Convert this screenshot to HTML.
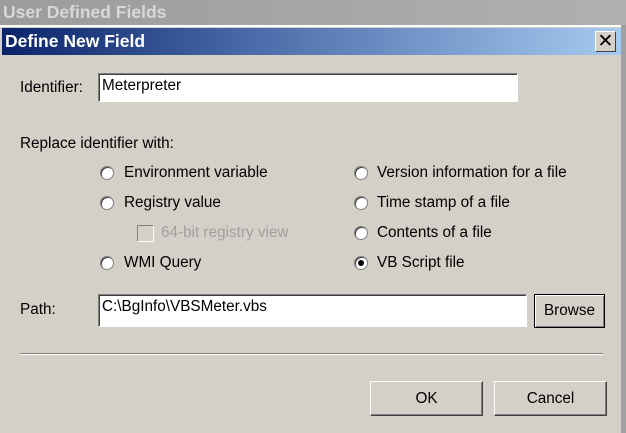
<!DOCTYPE html>
<html><head><meta charset="utf-8"><style>
body{margin:0;width:626px;height:433px;overflow:hidden;background:#d4d0c8;font-family:"Liberation Sans",Arial,sans-serif;font-size:15.3px;color:#000;position:relative}
.a{position:absolute}
.top{left:0;top:0;width:626px;height:25px;background:linear-gradient(90deg,#9c9c9c,#b0b0b0);color:#d8d8d8;font-weight:bold;font-size:17.5px;line-height:24px;padding-left:3px;box-sizing:border-box}
.title{left:2px;top:28px;width:619px;height:27px;background:linear-gradient(90deg,#0a246a,#4a6aa8 40%,#a6caf0);color:#fff;font-weight:bold;font-size:17.5px;line-height:27px;padding-left:3px;box-sizing:border-box}
.x{left:595px;top:31px;width:21px;height:21px;background:#d4d0c8;border:1px solid;border-color:#fff #404040 #404040 #fff;box-sizing:border-box;text-align:center;line-height:19px;font-size:19px}
.in{background:#fff;border:1px solid;border-color:#808080 #fff #fff #808080;box-shadow:inset 1px 1px 0 #404040;box-sizing:border-box;padding:2px 3px;line-height:20px}
.btn{border:1px solid;border-color:#fff #404040 #404040 #fff;box-shadow:inset -1px -1px 0 #808080;box-sizing:border-box;text-align:center}
.r{width:14px;height:14px;border-radius:50%;background:#fff;border:1px solid #808080;box-sizing:border-box;box-shadow:inset 1px 1px 0 #404040}
.t{line-height:16px}
</style></head><body>
<div class="a top">User Defined Fields</div>
<div class="a" style="left:0;top:25px;width:622px;height:2px;background:#fff"></div>
<div class="a" style="left:621px;top:25px;width:5px;height:408px;background:#a0a0a0"></div>
<div class="a title">Define New Field</div>
<div class="a x">✕</div>
<div class="a t" style="left:20px;top:80px">Identifier:</div>
<div class="a in" style="left:98px;top:73px;width:420px;height:29px">Meterpreter</div>
<div class="a t" style="left:20px;top:136px">Replace identifier with:</div>
<div class="a r" style="left:100px;top:166px"></div><div class="a t" style="left:124px;top:165px">Environment variable</div>
<div class="a r" style="left:100px;top:196px"></div><div class="a t" style="left:124px;top:195px">Registry value</div>
<div class="a" style="left:137px;top:225px;width:17px;height:17px;border:1px solid #808080;border-right-color:#fff;border-bottom-color:#fff;box-sizing:border-box"></div><div class="a t" style="left:161px;top:225px;color:#a0a0a0">64-bit registry view</div>
<div class="a r" style="left:100px;top:256px"></div><div class="a t" style="left:124px;top:255px">WMI Query</div>
<div class="a r" style="left:354px;top:166px"></div><div class="a t" style="left:377px;top:165px">Version information for a file</div>
<div class="a r" style="left:354px;top:196px"></div><div class="a t" style="left:377px;top:195px">Time stamp of a file</div>
<div class="a r" style="left:354px;top:226px"></div><div class="a t" style="left:377px;top:225px">Contents of a file</div>
<div class="a r" style="left:354px;top:256px"><div style="position:absolute;left:3px;top:3px;width:6px;height:6px;border-radius:50%;background:#000"></div></div><div class="a t" style="left:377px;top:255px">VB Script file</div>
<div class="a t" style="left:20px;top:302px">Path:</div>
<div class="a in" style="left:98px;top:294px;width:429px;height:33px">C:\BgInfo\VBSMeter.vbs</div>
<div class="a btn" style="left:534px;top:294px;width:71px;height:34px;line-height:32px;border-color:#000;box-shadow:inset 1px 1px 0 #fff,inset -1px -1px 0 #808080">Browse</div>
<div class="a" style="left:20px;top:353px;width:583px;height:1px;background:#808080;border-bottom:1px solid #fff"></div>
<div class="a btn" style="left:370px;top:381px;width:113px;height:35px;line-height:33px">OK</div>
<div class="a btn" style="left:494px;top:381px;width:113px;height:35px;line-height:33px">Cancel</div>
</body></html>
